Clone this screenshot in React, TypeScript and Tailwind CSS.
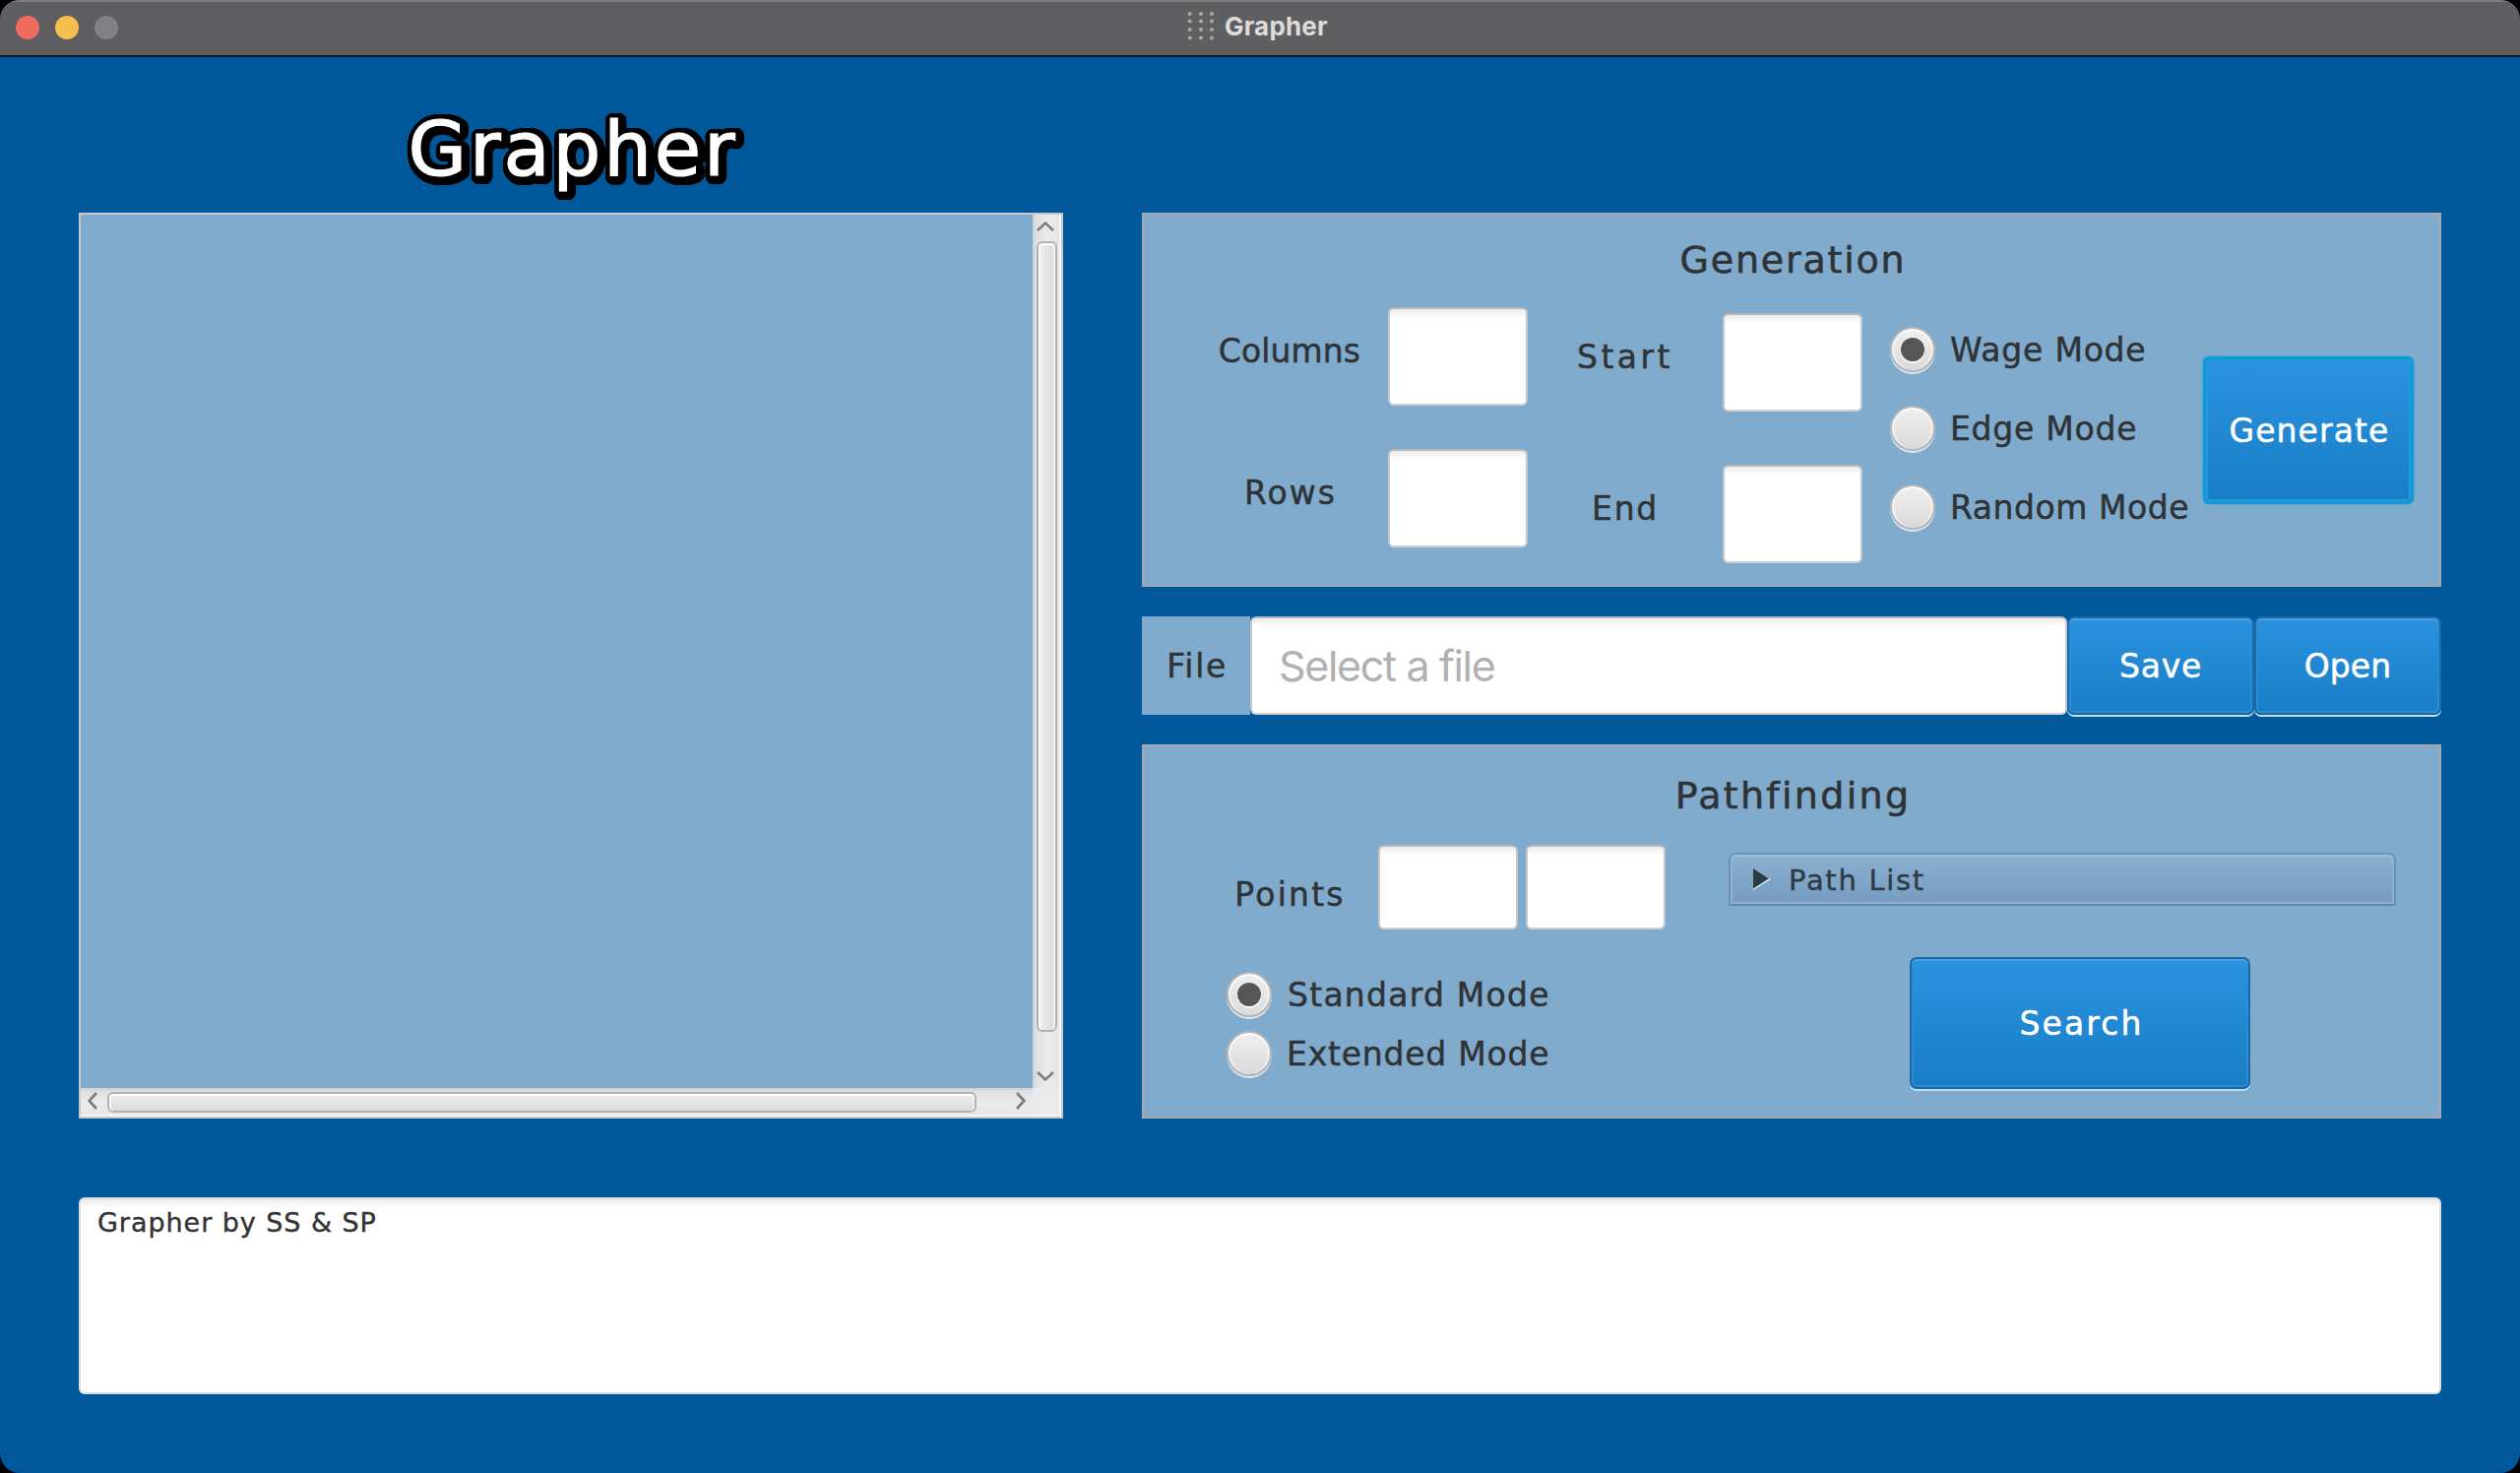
import React from "react";

type InputProps = { className: string; placeholder?: string };

function Field({ className, placeholder }: InputProps) {
  return (
    <input
      aria-label={placeholder ?? "value"}
      placeholder={placeholder}
      className={`block shrink-0 rounded-[6px] border-2 border-x-[#c4c8cb] border-t-[#b6b9bc] border-b-[#cfd0d1] bg-white bg-[linear-gradient(to_bottom,#ececec,#ffffff_9px)] outline-none ${className}`}
    />
  );
}

function Radio({ label, checked, tracking, height }: { label: string; checked?: boolean; tracking: string; height: string }) {
  return (
    <label className={`flex items-start gap-[15px] ${height}`}>
      <span className="flex size-[46px] shrink-0 items-center justify-center rounded-full border-2 border-[#b7b7b7] bg-linear-to-b from-[#f0f0f0] to-[#dadada] shadow-[0_2px_0_rgba(255,255,255,0.73),inset_0_2px_0_#ffffff,inset_2px_0_0_rgba(255,255,255,0.6),inset_-2px_0_0_rgba(255,255,255,0.6)]">
        {checked && <span className="size-6 rounded-full bg-[#565656] shadow-[0_2px_0_#fbfbfb]" />}
      </span>
      <span className={`flex h-[47px] items-center text-[33px] leading-none whitespace-nowrap text-[#303335] [-webkit-text-stroke:0.5px_#303335] ${tracking}`}>{label}</span>
    </label>
  );
}

function Caption({ text, className }: { text: string; className: string }) {
  return <span className={`flex shrink-0 items-center justify-center text-[33px] leading-none whitespace-nowrap text-[#303335] [-webkit-text-stroke:0.5px_#303335] ${className}`}>{text}</span>;
}

function PushButton({ text, className }: { text: string; className: string }) {
  return (
    <button
      className={`flex shrink-0 items-center justify-center rounded-[7px] border-2 border-[#186ba9] bg-linear-to-b from-[#2b93df] to-[#187dc6] bg-origin-border text-[33px] leading-none text-white [-webkit-text-stroke:0.5px_#ffffff] shadow-[0_2px_0_#bfdcf3,inset_0_2px_0_#4b9fe2,inset_0_0_0_2px_#2f8bd3] ${className}`}
    >
      {text}
    </button>
  );
}

function Title() {
  const steps = Array.from({ length: 48 }, (_, i) => (i / 48) * Math.PI * 2);
  const ring = (r: number) => steps.map((a) => `${(2 + Math.cos(a) * r).toFixed(2)}px ${(2 + Math.sin(a) * r).toFixed(2)}px 0 #000`);
  const textShadow = [...ring(7.2), ...ring(3), "2px 2px 3px #000"].join(", ");
  return (
    <h1 className="flex h-[158px] w-[1000px] items-center justify-center pt-[28px] pl-[4px] text-[77px] leading-none tracking-[2.8px] text-white [-webkit-text-stroke:1.2px_#ffffff]" style={{ textShadow }}>
      Grapher
    </h1>
  );
}

function Chevron({ points, className }: { points: string; className: string }) {
  return (
    <svg className={`shrink-0 ${className}`} fill="none" stroke="#7d7d7d" strokeWidth="2.6">
      <polyline points={points} />
    </svg>
  );
}

function GraphView() {
  return (
    <section className="grid h-[920px] w-[1000px] grid-cols-[1fr_29px] grid-rows-[1fr_29px] border-2 border-[#c8c9cb] bg-[#80abcd]">
      <div className="h-full" />
      <div className="flex flex-col items-center border-r-2 border-l-2 border-r-[#f6f6f6] border-l-[#d0d4d7] bg-linear-to-r from-[#dedede] via-[#ebebeb] to-[#e6e6e6] pt-[7px] pb-[7px]">
        <Chevron points="1,9 9,1.6 17,9" className="mr-[3px] h-[10px] w-[18px]" />
        <div className="mt-[10px] h-[803px] w-[21px] shrink-0 rounded-[6px] border-2 border-[#b2b2b2] bg-linear-to-r from-[#efefef] to-[#dadada] shadow-[inset_0_2px_0_#ffffff,inset_2px_0_0_#fbfbfb,inset_-2px_0_0_#f2f2f2]" />
        <Chevron points="1,1 9,8.4 17,1" className="mt-auto mr-[3px] h-[10px] w-[18px]" />
      </div>
      <div className="flex items-center border-t-2 border-b-2 border-t-[#d0d4d7] border-b-[#f6f6f6] bg-linear-to-b from-[#dedede] via-[#ebebeb] to-[#e6e6e6] pr-[7px] pl-[7px]">
        <Chevron points="9,1 1.6,9 9,17" className="mb-[3px] h-[18px] w-[10px]" />
        <div className="ml-[10px] h-[21px] w-[883px] shrink-0 rounded-[6px] border-2 border-[#b2b2b2] bg-linear-to-b from-[#efefef] to-[#dadada] shadow-[inset_0_2px_0_#ffffff,inset_2px_0_0_#f6f6f6,inset_-2px_0_0_#f2f2f2]" />
        <Chevron points="1,1 8.4,9 1,17" className="mb-[3px] ml-auto h-[18px] w-[10px]" />
      </div>
      <div className="border-r-2 border-b-2 border-[#f6f6f6] bg-[#eaeaea]" />
    </section>
  );
}

function Generation() {
  return (
    <section className="flex h-[380px] flex-col border-2 border-[#a3a9af] bg-[#80abcd]">
      <h2 className="flex h-[82px] items-center justify-center pt-[9px] pl-[3px] text-[38px] leading-none tracking-[1.8px] text-[#303335] [-webkit-text-stroke:0.6px_#303335]">Generation</h2>
      <div className="flex items-start pl-[59px]">
        <div className="flex flex-col gap-11 pt-[6px]">
          <Caption text="Columns" className="h-[100px] w-[180px] pr-[2px] tracking-[0.1px]" />
          <Caption text="Rows" className="h-[100px] w-[180px] tracking-[2px]" />
        </div>
        <div className="ml-[9px] flex flex-col gap-11 pt-3">
          <Field className="h-[100px] w-[142px]" />
          <Field className="h-[100px] w-[142px]" />
        </div>
        <div className="ml-[19px] flex flex-col gap-[54px] pt-[12px]">
          <Caption text="Start" className="h-[100px] w-[160px] tracking-[3.5px]" />
          <Caption text="End" className="h-[100px] w-[160px] tracking-[1.7px]" />
        </div>
        <div className="ml-[19px] flex flex-col gap-[54px] pt-[18px]">
          <Field className="h-[100px] w-[142px]" />
          <Field className="h-[100px] w-[142px]" />
        </div>
        <div className="ml-7 flex w-[318px] flex-col pt-8">
          <Radio label="Wage Mode" checked tracking="tracking-[0.78px]" height="h-[80px]" />
          <Radio label="Edge Mode" tracking="tracking-[0.76px]" height="h-[80px]" />
          <Radio label="Random Mode" tracking="tracking-[0.55px]" height="h-[80px]" />
        </div>
        <button className="mt-[62px] flex h-[150px] w-[214px] shrink-0 items-center justify-center rounded-[6px] border-[3px] border-[#0d99da] bg-linear-to-b from-[#2b93df] to-[#187dc6] bg-origin-border pl-[2px] text-[33px] leading-none tracking-[1.1px] text-white [-webkit-text-stroke:0.5px_#ffffff] shadow-[0_0_2px_#0d99da,inset_0_0_0_2px_#2697df]">
          Generate
        </button>
      </div>
    </section>
  );
}

function FileBar() {
  return (
    <section className="mt-[30px] flex h-[100px] items-stretch">
      <Caption text="File" className="w-[110px] bg-[#80abcd] pl-[2px] tracking-[1.6px]" />
      <Field placeholder="Select a file" className="w-[830px] pl-[27px] font-[Inter,sans-serif] text-[43px] tracking-[-1.35px] placeholder:text-[#b1b1b1]" />
      <PushButton text="Save" className="w-[190px] pr-0 pl-0 tracking-[0.8px]" />
      <PushButton text="Open" className="w-[190px] tracking-[0.09px]" />
    </section>
  );
}

function Pathfinding() {
  return (
    <section className="mt-[30px] flex h-[380px] flex-col border-2 border-[#a3a9af] bg-[#80abcd]">
      <h2 className="flex h-[100px] items-center justify-center pl-[3px] text-[38px] leading-none tracking-[2.3px] text-[#303335] [-webkit-text-stroke:0.6px_#303335]">Pathfinding</h2>
      <div className="flex items-start">
        <div className="flex w-[594px] flex-col">
          <div className="flex items-start pl-[78px]">
            <Caption text="Points" className="mt-[8px] h-[84px] w-[140px] pl-px tracking-[2.2px]" />
            <Field className="ml-5 h-[86px] w-[142px]" />
            <Field className="ml-2 h-[86px] w-[142px]" />
          </div>
          <div className="mt-[37px] flex flex-col pl-[84px]">
            <Radio label="Standard Mode" checked tracking="tracking-[1.25px] pl-px" height="h-[60px]" />
            <Radio label="Extended Mode" tracking="tracking-[0.78px]" height="h-[60px]" />
          </div>
        </div>
        <div className="flex w-[678px] flex-col items-start pt-[8px]">
          <div className="flex h-[54px] w-full items-center rounded-t-[7px] border-2 border-[#6e93b2] border-b-[#6387a7] bg-linear-to-b from-[#8ab1d2] to-[#759cbf] pl-[23px] shadow-[inset_0_2px_0_#a0c0da,inset_0_0_0_2px_#8fb2cf]">
            <svg className="h-[22px] w-[19px]" viewBox="0 0 19 22">
              <path d="M0 0 L18 11 L0 22 Z" fill="#d7e5f0" />
              <path d="M0 0 L16 10.3 L0 20.5 Z" fill="#2c3c49" />
            </svg>
            <span className="mt-[2px] ml-[17px] text-[29px] leading-none tracking-[1.7px] text-[#2f3b44] [-webkit-text-stroke:0.4px_#2f3b44]">Path List</span>
          </div>
          <PushButton text="Search" className="mt-[52px] ml-[184px] h-[134px] w-[346px] pl-[3px] tracking-[2.1px]" />
        </div>
      </div>
    </section>
  );
}

function TitleBar() {
  return (
    <header className="flex h-[58px] items-start border-t-2 border-b-2 border-t-[#7c7c7e] border-b-[#03162f] bg-[#5f5f61]">
      <div className="flex gap-4 pt-[14px] pl-4">
        <span className="size-6 rounded-full bg-[#ed6a5f]" />
        <span className="size-6 rounded-full bg-[#f5bf4f]" />
        <span className="size-6 rounded-full bg-[#828284]" />
      </div>
      <svg className="mt-[8px] ml-[1086px] h-[34px] w-[30px]" viewBox="0 0 30 34">
        {[4, 11.6, 20, 28.4].map((y) => (
          <g key={y}>
            <path d={`M3 ${y}H26`} stroke="#68686a" strokeWidth="1" />
            {[2.7, 14, 25].map((x) => (
              <circle key={x} cx={x} cy={y} r="2" fill="#a9a9aa" />
            ))}
          </g>
        ))}
      </svg>
      <span className="mt-[12px] ml-[8px] font-[Inter,sans-serif] text-[26px] leading-none font-bold tracking-[0.18px] text-[#dcdcdd]">Grapher</span>
    </header>
  );
}

export default function App() {
  return (
    <div className="h-[1496px] w-[2560px] bg-black">
      <div className="flex h-full flex-col overflow-hidden rounded-[20px] bg-[#00589b] font-['DejaVu_Sans',sans-serif]">
        <TitleBar />
        <main className="flex flex-col px-20">
          <div className="flex gap-20">
            <div className="flex flex-col">
              <Title />
              <GraphView />
            </div>
            <div className="flex w-[1320px] flex-col pt-[158px]">
              <Generation />
              <FileBar />
              <Pathfinding />
            </div>
          </div>
          <div className="mt-20 h-[200px] rounded-[6px] border-2 border-[#dedede] border-t-[#d9dcdf] bg-white bg-[linear-gradient(to_bottom,#ececec,#ffffff_9px)] pt-[4px] pl-[17px] text-[27px] tracking-[0.95px] text-[#333333] [-webkit-text-stroke:0.4px_#333333]">
            Grapher by SS &amp; SP
          </div>
        </main>
      </div>
    </div>
  );
}
